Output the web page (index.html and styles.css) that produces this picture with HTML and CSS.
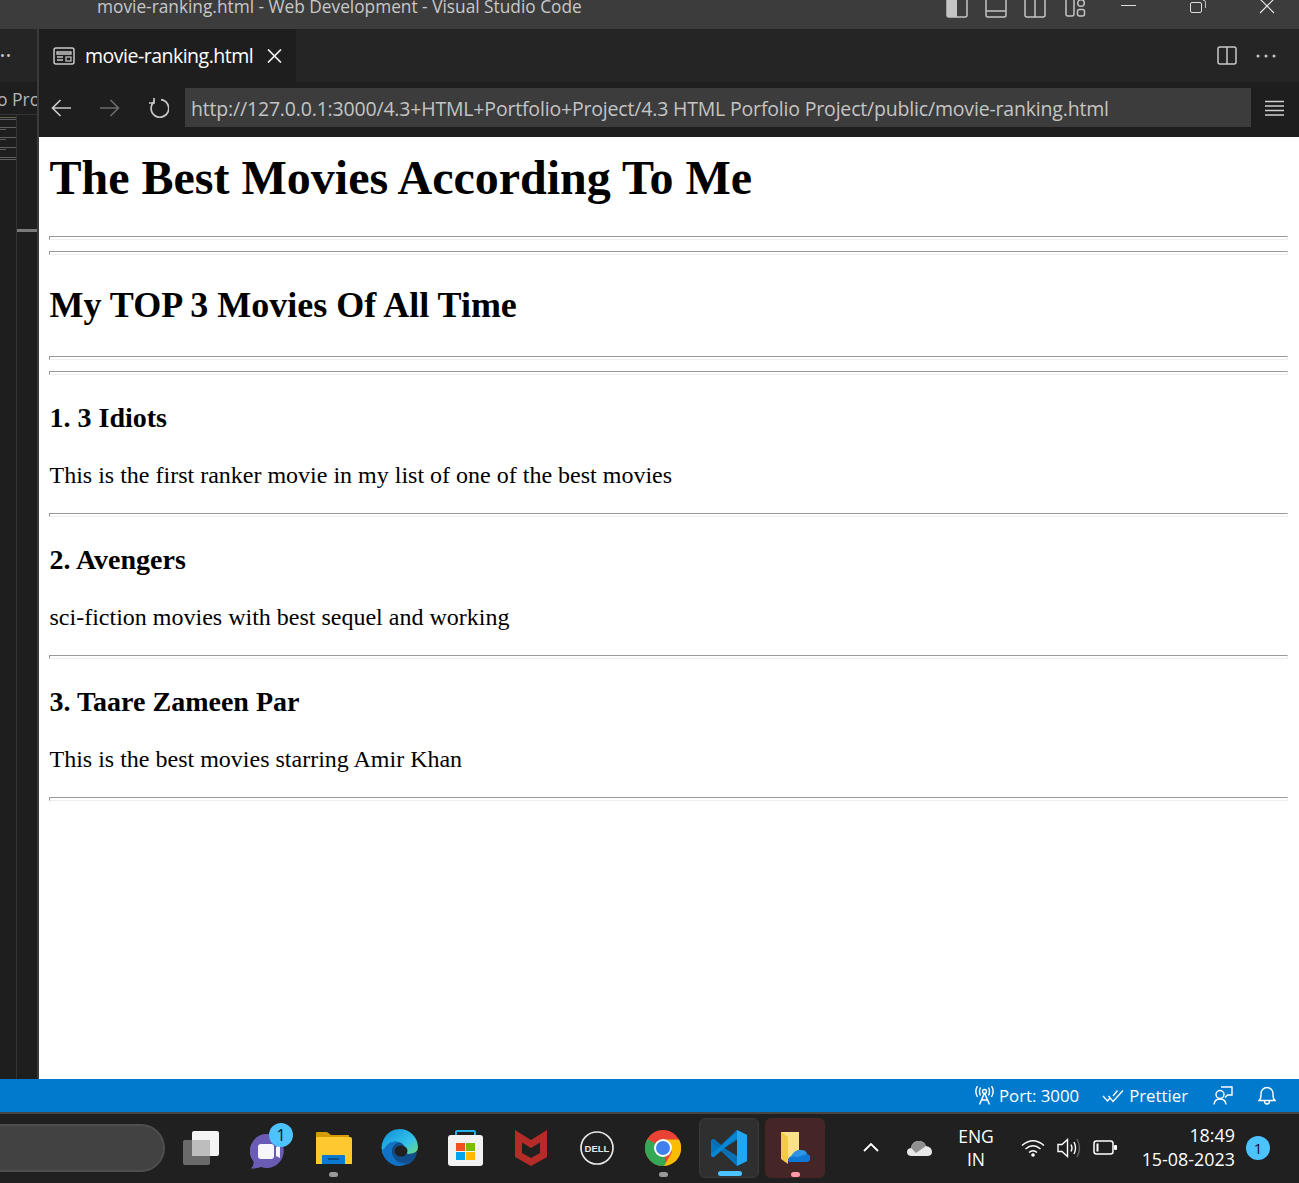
FILE: index.html

```html
<!DOCTYPE html>
<html lang="en">
<head>
  <meta charset="UTF-8">
  <title>movie-ranking.html - Web Development - Visual Studio Code</title>
  <meta name="viewport" content="width=device-width, initial-scale=1.0">
  <link rel="stylesheet" href="styles.css">
</head>
<body>
  <div class="titlebar">
    <div class="window-title">movie-ranking.html - Web Development - Visual Studio Code</div>
    <div class="layout-icons">
      <svg width="22" height="18" viewBox="0 0 22 18"><path d="M1 0V15a2 2 0 0 0 2 2H19a2 2 0 0 0 2-2V0" fill="none" stroke="#c4c4c4" stroke-width="1.5"/><path d="M1 0H11V17H3a2 2 0 0 1-2-2Z" fill="#c4c4c4"/></svg>
      <svg width="22" height="18" viewBox="0 0 22 18"><path d="M1 0V15a2 2 0 0 0 2 2H19a2 2 0 0 0 2-2V0M1 11H21" fill="none" stroke="#c4c4c4" stroke-width="1.5"/></svg>
      <svg width="22" height="18" viewBox="0 0 22 18"><path d="M1 0V15a2 2 0 0 0 2 2H19a2 2 0 0 0 2-2V0M11 0V17" fill="none" stroke="#c4c4c4" stroke-width="1.5"/></svg>
      <svg width="21" height="18" viewBox="0 0 21 18"><path d="M1 0V14a2 2 0 0 0 2 2H7a2 2 0 0 0 2-2V0" fill="none" stroke="#c4c4c4" stroke-width="1.5"/><circle cx="16" cy="3" r="3.3" fill="none" stroke="#c4c4c4" stroke-width="1.5"/><rect x="12.5" y="9.5" width="7" height="6.5" rx="2" fill="none" stroke="#c4c4c4" stroke-width="1.5"/></svg>
    </div>
    <div class="window-controls">
      <svg width="16" height="14" viewBox="0 0 16 14"><path d="M0 5.5H15" stroke="#ddd" stroke-width="1"/></svg>
      <svg width="16" height="14" viewBox="0 0 16 14"><rect x=".5" y="2.5" width="11" height="10" rx="1.5" fill="none" stroke="#ddd"/><path d="M13 0.5h1q1.500 0 1.500 1.500V8" fill="none" stroke="#ddd" stroke-width=".8"/></svg>
      <svg width="16" height="14" viewBox="0 0 16 14"><path d="M1 -1L15 13M15 -1L1 13" stroke="#eee" stroke-width="1.1"/></svg>
    </div>
  </div>

  <div class="workbench">
    <div class="sidebar">
      <div class="sidebar-dots">&#8226;&#8226;</div>
      <div class="sidebar-head">o Pro</div>
      <div class="outline">
        <div class="minimap-text">
          <i class="code-head"></i><i class="gap"></i><i></i><i class="short gap"></i><i></i><i class="short gap"></i><i></i><i class="short gap"></i><i></i><i></i>
        </div>
        <div class="scroll-col"><div class="scroll-thumb"></div></div>
      </div>
    </div>

    <div class="editor">
      <div class="tabbar">
        <div class="tab">
          <svg width="22" height="18" viewBox="0 0 22 18"><rect x="1" y="1" width="20" height="16" rx="2" fill="none" stroke="#c8c8c8" stroke-width="1.500"/><path d="M4 5H18V7H4ZM4 10H10M4 13H10" fill="none" stroke="#c8c8c8" stroke-width="1.300"/><rect x="13" y="10" width="5" height="4" fill="none" stroke="#c8c8c8" stroke-width="1.200"/></svg>
          <span class="tab-name">movie-ranking.html</span>
          <svg class="tab-close" width="15" height="14" viewBox="0 0 15 14"><path d="M1 .5L14 13.500M14 .5L1 13.500" stroke="#f0f0f0" stroke-width="1.700"/></svg>
        </div>
        <div class="tab-actions">
          <svg width="20" height="19" viewBox="0 0 20 19"><rect x="1" y="1" width="18" height="17" rx="2" fill="none" stroke="#c8c8c8" stroke-width="1.500"/><path d="M10 1V18" stroke="#c8c8c8" stroke-width="1.500"/></svg>
          <svg width="20" height="4" viewBox="0 0 20 4"><circle cx="2" cy="2" r="1.500" fill="#c8c8c8"/><circle cx="10" cy="2" r="1.500" fill="#c8c8c8"/><circle cx="18" cy="2" r="1.500" fill="#c8c8c8"/></svg>
        </div>
      </div>

      <div class="navbar">
        <svg class="nav-back" width="20" height="18" viewBox="0 0 20 18"><path d="M20 9H2M9.500 1L1.500 9L9.500 17" fill="none" stroke="#c8c8c8" stroke-width="1.700"/></svg>
        <svg class="nav-forward" width="20" height="18" viewBox="0 0 20 18"><path d="M0 9H18M10.500 1L18.500 9L10.500 17" fill="none" stroke="#6b6b6b" stroke-width="1.700"/></svg>
        <svg class="nav-reload" width="20" height="20" viewBox="0 0 20 20"><path d="M5.500 3.500A8.800 8.800 0 1 0 12 1.700" fill="none" stroke="#c8c8c8" stroke-width="1.700"/><path d="M5 0V5H0" fill="none" stroke="#c8c8c8" stroke-width="1.700"/></svg>
        <div class="urlbar">http://127.0.0.1:3000/4.3+HTML+Portfolio+Project/4.3 HTML Porfolio Project/public/movie-ranking.html</div>
        <svg class="nav-menu" width="19" height="16" viewBox="0 0 19 16"><path d="M0 1.500H19M0 6H19M0 10.500H19M0 15H19" stroke="#d0d0d0" stroke-width="1.500"/></svg>
      </div>

      <div class="page">
        <h1>The Best Movies According To Me</h1>
        <hr>
        <hr class="tight">
        <h2>My TOP 3 Movies Of All Time</h2>
        <hr>
        <hr class="tight">
        <h3>1. 3 Idiots</h3>
        <p>This is the first ranker movie in my list of one of the best movies</p>
        <hr>
        <h3>2. Avengers</h3>
        <p>sci-fiction movies with best sequel and working</p>
        <hr>
        <h3>3. Taare Zameen Par</h3>
        <p>This is the best movies starring Amir Khan</p>
        <hr>
      </div>
    </div>
  </div>

  <div class="statusbar">
    <span class="status-item">
      <svg width="19" height="19" viewBox="0 0 19 19"><path d="M9.500 7L4.500 18.500M9.500 7L14.500 18.500M6.500 14H12.500" fill="none" stroke="#fff" stroke-width="1.500"/><circle cx="9.500" cy="5.500" r="2" fill="none" stroke="#fff" stroke-width="1.300"/><path d="M5.500 1.500Q3.500 5.500 5.500 9.500M13.500 1.500Q15.500 5.500 13.500 9.500M2.500 0Q-.8 5.500 2.500 11M16.500 0Q19.800 5.500 16.500 11" fill="none" stroke="#fff" stroke-width="1.400"/></svg>
      Port: 3000
    </span>
    <span class="status-item">
      <svg width="22" height="14" viewBox="0 0 22 14"><path d="M1 7L5.500 12L8 9M6.500 7L11 12.500L21 1.500M11 7L15.500 1.500" fill="none" stroke="#fff" stroke-width="1.300"/></svg>
      Prettier
    </span>
    <svg class="status-icon" width="20" height="19" viewBox="0 0 20 19"><circle cx="7" cy="8.500" r="4" fill="none" stroke="#fff" stroke-width="1.400"/><path d="M1 18.500Q1.500 13 7 13Q12.500 13 13 18.500M8 1H19V9H14.500L12 11.500" fill="none" stroke="#fff" stroke-width="1.400"/></svg>
    <svg class="status-icon" width="18" height="19" viewBox="0 0 18 19"><path d="M1 14.500Q3 13 3 9V7.500A6 6 0 0 1 15 7.500V9Q15 13 17 14.500ZM6.500 15Q6.500 18 9 18Q11.500 18 11.500 15" fill="none" stroke="#fff" stroke-width="1.400"/></svg>
  </div>

  <div class="taskbar">
    <div class="searchbox"></div>
    <div class="apps">
      <div class="app">
        <svg width="38" height="36" viewBox="0 0 38 36"><rect x="1" y="10" width="27" height="25" rx="2" fill="#6a6a6a"/><rect x="10" y="1" width="27" height="25" rx="2" fill="#f4f4f4"/><rect x="10" y="10" width="18" height="16" fill="#bdbdbd"/></svg>
      </div>
      <div class="app">
        <svg class="teams-icon" width="40" height="42" viewBox="0 0 40 42"><path d="M17 7A17 17 0 1 1 11 40Q6 42 1 41.500Q4 38 3.500 34.500A17 17 0 0 1 17 7Z" fill="#6a5bb5"/><rect x="8" y="17" width="16" height="15" rx="3" fill="#f6f6fb"/><path d="M26 20L30 18V31L26 29Z" fill="#f6f6fb"/></svg>
        <span class="app-badge">1</span>
      </div>
      <div class="app">
        <svg width="37" height="34" viewBox="0 0 37 34"><path d="M1 2Q1 1 2 1H12L16 4H34V12H1Z" fill="#d69a06"/><path d="M1 6H35Q37 6 37 8V33H1Z" fill="#fdc92f"/><path d="M7 26Q7 25 8 25H29Q30 25 30 26V34H7Z" fill="#0a7ad1" transform="translate(0 -1)"/><path d="M13 28H24" stroke="#07426f" stroke-width="1.500"/></svg>
        <span class="app-dot"></span>
      </div>
      <div class="app">
        <svg width="37" height="37" viewBox="0 0 37 37"><defs><linearGradient id="edge-a" x1="0" y1="0" x2="1" y2="1"><stop offset="0" stop-color="#0c8fd8"/><stop offset=".6" stop-color="#35c1ea"/><stop offset="1" stop-color="#7be05f"/></linearGradient></defs><path d="M18.500 0A18.500 18.500 0 0 1 37 18Q37 25 28 25Q21 25 22.500 21Q25 18 20 14Q10 10 4 19Q1 25 4 29A18.500 18.500 0 0 1 18.500 0Z" fill="url(#edge-a)"/><path d="M4 19Q10 10 19 13.500Q11 15 11 23Q12 33 24 34Q28 35 33 30Q26 37 18 37A18.500 18.500 0 0 1 1 22Q1 20 4 19Z" fill="#1073c8"/><path d="M19 13.500Q26 16 22 21Q21 25 28 25Q33 25 36 22Q36 30 28 35Q16 37 12 27Q9 17 19 13.500Z" fill="#0d5aa7" opacity=".8"/><ellipse cx="20" cy="22" rx="6.500" ry="5.500" fill="#202020"/></svg>
      </div>
      <div class="app">
        <svg width="35" height="36" viewBox="0 0 35 36"><path d="M8 7V2Q8 1 9 1H26Q27 1 27 2V7" fill="none" stroke="#21b4e8" stroke-width="2"/><rect x="0" y="5" width="35" height="31" rx="3" fill="#f2f2f2"/><rect x="8" y="13" width="9" height="8" fill="#f25022"/><rect x="18" y="13" width="9" height="8" fill="#7fba00"/><rect x="8" y="22" width="9" height="8" fill="#00a4ef"/><rect x="18" y="22" width="9" height="8" fill="#ffb900"/></svg>
      </div>
      <div class="app">
        <svg width="32" height="36" viewBox="0 0 32 36"><path d="M0 0L16 10L32 0V27L16 36L0 27Z" fill="#b52b27"/><path d="M7 12.500L16 18L25 12.500V23L16 28L7 23Z" fill="#202020"/></svg>
      </div>
      <div class="app">
        <svg width="34" height="34" viewBox="0 0 34 34"><circle cx="17" cy="17" r="16" fill="none" stroke="#e6e6e6" stroke-width="1.700"/><text class="dell-text" x="17" y="20.500" text-anchor="middle">DELL</text></svg>
      </div>
      <div class="app">
        <svg width="36" height="36" viewBox="0 0 36 36"><circle cx="18" cy="18" r="18" fill="#ea4335"/><path d="M18 36A18 18 0 0 1 2.400 9L18 18L21 36Z" fill="#34a853"/><path d="M34 9.500A18 18 0 0 1 19 36L27 22V18L18 9.500H33Z" fill="#fbbc04"/><circle cx="18" cy="18" r="9" fill="#fff"/><circle cx="18" cy="18" r="7" fill="#3f80ec"/></svg>
        <span class="app-dot"></span>
      </div>
      <div class="app app-active">
        <svg width="36" height="36" viewBox="0 0 36 36"><path d="M26 0L36 5V31L26 36L10 21L3 27L0 25V11L3 9L10 15Z" fill="#0078c4"/><path d="M26 10V26L13 18Z" fill="#2f2f2f"/><path d="M2 11L26 31" stroke="#0a6fb3" stroke-width="4" stroke-linecap="round"/><path d="M2 25L26 5" stroke="#0a87d4" stroke-width="4" stroke-linecap="round"/><path d="M26 0L36 5V31L26 36Z" fill="#22a6f0"/></svg>
        <span class="app-bar"></span>
      </div>
      <div class="app app-open">
        <svg width="30" height="34" viewBox="0 0 30 34"><path d="M1 1H19V28H1Z" fill="#fbe08a"/><path d="M1 1L8 6V33L1 28Z" fill="#f6c945"/><path d="M8 30Q8 25 13 25Q15 18 21 19Q26 19 27 23Q31 24 30 28Q30 31 26 31H10Q8 31 8 30Z" fill="#0f78d4"/><path d="M11 25Q15 18 21 19Q26 19 27 23L18 26Z" fill="#2d95e3"/></svg>
        <span class="app-dot app-dot-pink"></span>
      </div>
    </div>

    <div class="tray">
      <svg class="tray-chevron" width="16" height="9" viewBox="0 0 16 9"><path d="M1 8L8 1L15 8" fill="none" stroke="#fff" stroke-width="1.800"/></svg>
      <svg class="tray-cloud" width="25" height="16" viewBox="0 0 25 16"><path d="M5 16Q0 16 0 12Q0 8.500 4 8Q5 1 12 1Q17 1 19 6Q25 7 25 12Q25 16 20 16Z" fill="#e8e8e8"/><path d="M12 1Q17 1 19 6L9 13L4 8Q5 1 12 1Z" fill="#909090"/></svg>
      <div class="tray-lang">ENG<br>IN</div>
      <svg class="tray-wifi" width="24" height="18" viewBox="0 0 24 18"><path d="M1 6.500Q12 -3 23 6.500M4.500 10Q12 3.500 19.500 10M8 13.500Q12 10 16 13.500" fill="none" stroke="#fff" stroke-width="1.500"/><circle cx="12" cy="16" r="1.800" fill="#fff"/></svg>
      <svg class="tray-volume" width="25" height="20" viewBox="0 0 25 20"><path d="M1 6.500H5L10.500 1.500V18.500L5 13.500H1Z" fill="none" stroke="#fff" stroke-width="1.400"/><path d="M14 6.500Q16 10 14 13.500M17 4Q20 10 17 16" fill="none" stroke="#fff" stroke-width="1.400"/><path d="M20 1Q25 10 20 19" fill="none" stroke="#666" stroke-width="1.400"/></svg>
      <svg class="tray-battery" width="24" height="15" viewBox="0 0 24 15"><rect x="1" y="1" width="19" height="13" rx="2.500" fill="none" stroke="#fff" stroke-width="1.500"/><rect x="3.500" y="3.500" width="2" height="8" fill="#fff"/><rect x="21" y="5" width="3" height="5" rx="1" fill="#fff"/></svg>
      <div class="tray-clock">18:49<br>15-08-2023</div>
      <span class="tray-badge">1</span>
    </div>
  </div>
</body>
</html>
```

FILE: styles.css

```css
html, body {
  margin: 0;
  height: 100%;
}
body {
  display: flex;
  flex-direction: column;
  width: 1299px;
  height: 1183px;
  overflow: hidden;
  font-family: "Open Sans", "Noto Sans", sans-serif;
  background-color: #1e1e1e;
}
svg {
  display: block;
  flex: none;
}

/* window title */
.titlebar {
  display: flex;
  height: 29px;
  flex: none;
  overflow: hidden;
  background-color: #3c3c3c;
}
.window-title {
  margin: -5px 0 0 97px;
  width: 849px;
  font-size: 17.3px;
  line-height: 24px;
  color: #c8c8c8;
  white-space: nowrap;
}
.layout-icons {
  display: flex;
  gap: 17px;
}
.layout-icons svg:last-child {
  margin-left: 2px;
}
.window-controls {
  display: flex;
  gap: 53px;
  margin-left: 35px;
}

/* left side */
.workbench {
  display: flex;
  flex: 1;
  min-height: 0;
}
.sidebar {
  width: 37px;
  flex: none;
  border-right: 2px solid #3a3a3a;
  background-color: #1e1e1e;
  overflow: hidden;
}
.sidebar-dots {
  height: 53px;
  font-size: 13px;
  line-height: 52px;
  letter-spacing: 1px;
  color: #c8c8c8;
  background-color: #252526;
}
.sidebar-head {
  height: 32px;
  margin-left: -3px;
  font-size: 17.5px;
  line-height: 34px;
  white-space: nowrap;
  color: #b5b5b5;
  border-bottom: 1px solid #333;
}
.outline {
  display: flex;
  height: 965px;
}
.minimap-text {
  width: 16px;
  flex: none;
  padding-top: 2px;
  border-right: 1px solid #333;
}
.minimap-text i {
  display: block;
  height: 1px;
  margin-bottom: 1px;
  background-color: #5e5e5e;
}
.minimap-text .code-head {
  background-color: #5c6648;
}
.minimap-text .short {
  width: 6px;
}
.minimap-text .gap {
  margin-bottom: 7px;
}
.scroll-col {
  flex: 1;
  padding-top: 114px;
}
.scroll-thumb {
  height: 3px;
  background-color: #7a7a7a;
}

/* editor */
.editor {
  flex: 1;
  display: flex;
  flex-direction: column;
  min-width: 0;
}
.tabbar {
  display: flex;
  align-items: center;
  justify-content: space-between;
  height: 53px;
  flex: none;
  background-color: #252526;
}
.tab {
  display: flex;
  align-items: center;
  width: 257px;
  height: 53px;
  padding-left: 14px;
  box-sizing: border-box;
  background-color: #1e1e1e;
}
.tab-name {
  margin-left: 10px;
  font-size: 19.5px;
  letter-spacing: -0.5px;
  color: #fff;
  white-space: nowrap;
}
.tab-close {
  margin-left: 14px;
}
.tab-actions {
  display: flex;
  align-items: center;
  gap: 19px;
  padding-right: 23px;
}
.navbar {
  display: flex;
  align-items: center;
  height: 55px;
  flex: none;
  box-sizing: border-box;
  padding: 0 0 4px 12px;
  background-color: #1e1e1e;
}
.nav-forward {
  margin-left: 29px;
}
.nav-reload {
  margin-left: 29px;
}
.urlbar {
  width: 1066px;
  height: 39px;
  flex: none;
  margin-left: 16px;
  padding-left: 6px;
  box-sizing: border-box;
  font-size: 19.5px;
  letter-spacing: -0.18px;
  line-height: 42px;
  color: #c4c4c4;
  white-space: nowrap;
  background-color: #3c3c3c;
}
.nav-menu {
  margin-left: 14px;
}

/* rendered page */
.page {
  flex: 1;
  padding: 17px 11px 0 10.5px;
  overflow: hidden;
  font-family: "Liberation Serif", "Times New Roman", serif;
  color: #000;
  background-color: #fff;
}
h1, h2, h3, p {
  margin: 0;
  font-weight: bold;
}
h1 {
  font-size: 48px;
  line-height: 47px;
  margin-bottom: 35px;
}
h2 {
  font-size: 36px;
  line-height: 42px;
  margin: 29px 0 30px;
}
h3 {
  font-size: 28px;
  line-height: 32px;
  margin: 27px 0 27px;
}
p {
  font-size: 24px;
  font-weight: normal;
  line-height: 28px;
  margin-bottom: 24px;
}
hr {
  height: 2px;
  margin: 0 0 0 -0.5px;
  border: 1px solid;
  border-color: #9a9a9a #eeeeee #eeeeee #9a9a9a;
}
hr.tight {
  margin-top: 11px;
}

/* status bar */
.statusbar {
  display: flex;
  align-items: center;
  justify-content: flex-end;
  height: 33px;
  flex: none;
  padding-right: 23px;
  gap: 25px;
  font-size: 16.8px;
  color: #fff;
  background-color: #007acc;
}
.status-item {
  display: flex;
  align-items: center;
  gap: 5px;
}
.status-item + .status-item {
  margin-left: -2px;
}

/* windows taskbar */
.taskbar {
  display: flex;
  align-items: center;
  height: 71px;
  flex: none;
  border-top: 2px solid #454545;
  padding-bottom: 2px;
  box-sizing: border-box;
  background-color: #202020;
  color: #fff;
}
.searchbox {
  width: 165px;
  height: 48px;
  flex: none;
  box-sizing: border-box;
  border: 2px solid #4e4e4e;
  border-left: none;
  border-radius: 0 24px 24px 0;
  background-color: #414241;
}
.apps {
  display: flex;
  gap: 6px;
  margin-left: 6px;
}
.app {
  position: relative;
  display: flex;
  align-items: center;
  justify-content: center;
  width: 60px;
  height: 60px;
  box-sizing: border-box;
  border-radius: 6px;
}
.app-active {
  background-color: #2f2f2f;
  border: 1px solid #3a3a3a;
}
.app-open {
  background-color: #452525;
}
.teams-icon {
  margin-left: 6px;
}
.app-badge {
  position: absolute;
  top: 5px;
  right: 4px;
  width: 24px;
  height: 24px;
  border-radius: 50%;
  font-size: 16px;
  line-height: 24px;
  text-align: center;
  color: #111;
  background-color: #4cc2ff;
}
.app-dot {
  position: absolute;
  bottom: 1px;
  left: 26px;
  width: 9px;
  height: 5px;
  border-radius: 3px;
  background-color: #9a9a9a;
}
.app-dot-pink {
  background-color: #ff9aa8;
}
.app-bar {
  position: absolute;
  bottom: 1px;
  left: 18px;
  width: 24px;
  height: 5px;
  border-radius: 3px;
  background-color: #4cc2ff;
}
.dell-text {
  font-family: "Liberation Sans", sans-serif;
  font-size: 9.500px;
  font-weight: bold;
  fill: #e6e6e6;
}
.tray {
  display: flex;
  align-items: center;
  margin-left: 38px;
}
.tray-cloud {
  margin-left: 28px;
}
.tray-lang {
  width: 50px;
  margin-left: 19px;
  font-size: 17.5px;
  line-height: 23px;
  text-align: center;
}
.tray-wifi {
  margin-left: 20px;
}
.tray-volume {
  margin-left: 12px;
}
.tray-battery {
  margin-left: 11px;
}
.tray-clock {
  width: 100px;
  margin: -1px 0 0 18px;
  font-size: 17.9px;
  line-height: 24px;
  text-align: right;
  white-space: nowrap;
}
.tray-badge {
  width: 24px;
  height: 24px;
  margin-left: 11px;
  border-radius: 50%;
  font-size: 15px;
  line-height: 24px;
  text-align: center;
  color: #111;
  background-color: #4cc2ff;
}
```
